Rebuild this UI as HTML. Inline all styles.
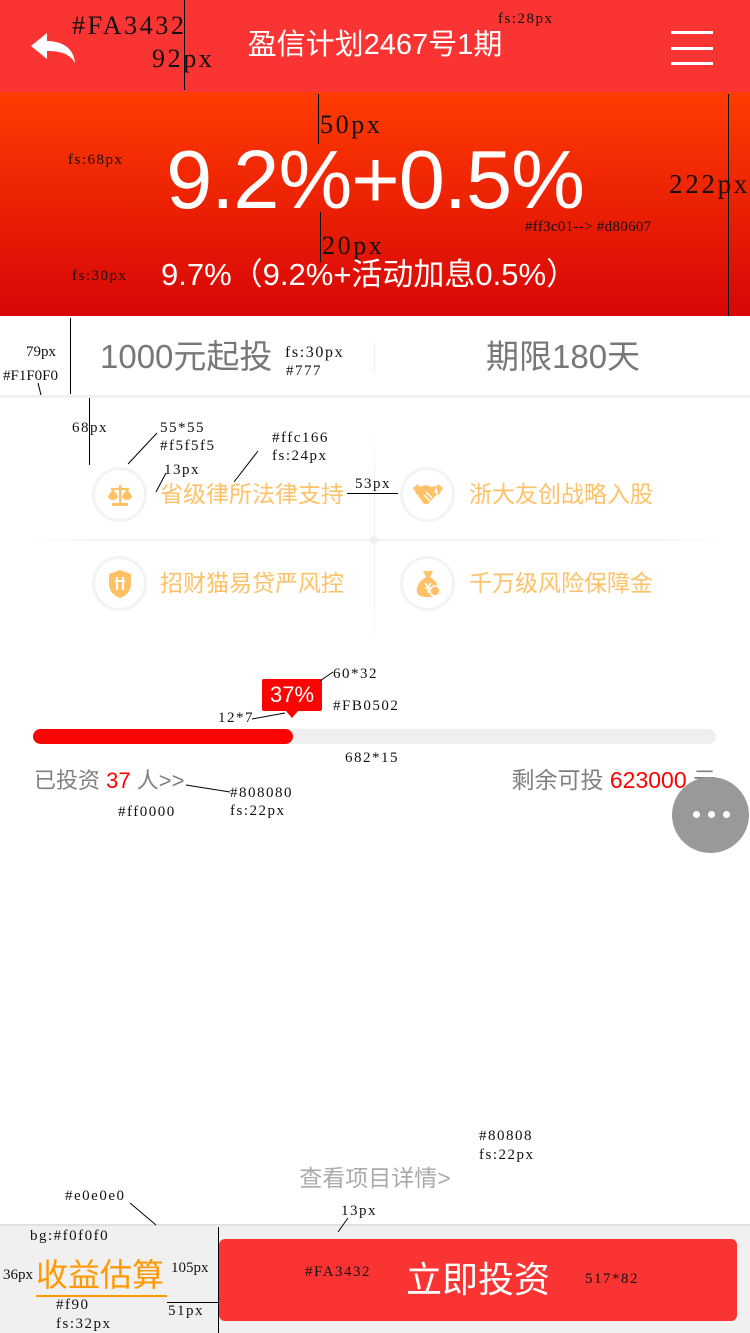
<!DOCTYPE html>
<html><head><meta charset="utf-8"><style>
*{margin:0;padding:0;box-sizing:border-box}
body{width:750px;height:1333px;position:relative;background:#fff;font-family:"Liberation Sans","Noto Sans CJK SC",sans-serif;overflow:hidden}
.a{position:absolute;white-space:nowrap}
.n{position:absolute;white-space:nowrap;font-family:"Liberation Serif","Noto Serif CJK SC",serif;color:#111;line-height:1;letter-spacing:0.1em}
.vl{position:absolute;width:1px;background:#000}
.hl{position:absolute;height:1px;background:#000}
.circ{position:absolute;width:55px;height:55px;border-radius:50%;border:3px solid #f3f3f3;background:#fff}
.ft{position:absolute;color:#ffc166;font-size:23px;line-height:24px}
</style></head><body>
<!-- header -->
<div class="a" style="left:0;top:0;width:750px;height:92px;background:#FA3432"></div>
<svg class="a" style="left:30px;top:32px" width="48" height="32" viewBox="0 0 48 32"><path d="M1 14 L17 1 L17 9 C33 9 44 17 45 31 C40 22 31 19 17 19 L17 27 Z" fill="#fff"/></svg>
<div class="a" style="left:0;width:750px;top:27px;text-align:center;color:#fff;font-size:29px;line-height:36px">盈信计划2467号1期</div>
<div class="a" style="left:671px;top:31px;width:42px;height:3px;background:#fff"></div>
<div class="a" style="left:671px;top:47px;width:42px;height:3px;background:#fff"></div>
<div class="a" style="left:671px;top:62px;width:42px;height:3px;background:#fff"></div>
<!-- hero -->
<div class="a" style="left:0;top:92px;width:750px;height:224px;background:linear-gradient(#ff3c01,#d80607)"></div>
<div class="a" style="left:0;width:750px;top:136px;text-align:center;color:#fff;font-size:83px;line-height:88px;letter-spacing:-1px">9.2%+0.5%</div>
<div class="a" style="left:161px;top:256px;color:#fff;font-size:31px;line-height:38px">9.7%（9.2%+活动加息0.5%）</div>
<!-- terms row -->
<div class="a" style="left:100px;top:337px;color:#777;font-size:33px;line-height:40px">1000元起投</div>
<div class="a" style="left:486px;top:337px;color:#777;font-size:33px;line-height:40px">期限180天</div>
<div class="a" style="left:374px;top:342px;width:1px;height:30px;background:#eee"></div>
<div class="a" style="left:0;top:395px;width:750px;height:3px;background:#F1F0F0"></div>
<!-- features -->
<div class="a" style="left:20px;top:539px;width:710px;height:2px;background:linear-gradient(90deg,#fff,#f2f2f2 15%,#f2f2f2 85%,#fff)"></div>
<div class="a" style="left:374px;top:425px;width:1px;height:225px;background:linear-gradient(#fff,#f2f2f2 20%,#f2f2f2 80%,#fff)"></div>
<div class="a" style="left:370px;top:536px;width:8px;height:8px;border-radius:50%;background:#eee"></div>
<div class="circ" style="left:92px;top:467px"></div>
<div class="circ" style="left:400px;top:467px"></div>
<div class="circ" style="left:92px;top:556px"></div>
<div class="circ" style="left:400px;top:556px"></div>
<svg class="a" style="left:106px;top:481px" width="28" height="28" viewBox="0 0 28 28" fill="#ffc166"><rect x="13" y="4" width="2.5" height="18"/><rect x="5" y="7" width="18" height="2"/><path d="M2 15 L7 8 L12 15 A5 4 0 0 1 2 15Z M16 15 L21 8 L26 15 A5 4 0 0 1 16 15Z"/><rect x="6" y="22" width="16" height="3"/></svg>
<svg class="a" style="left:412px;top:482px" width="32" height="26" viewBox="0 0 32 26" fill="#ffc166"><path d="M1 6 L6 2 L10 10 L5 13Z M31 6 L26 2 L22 10 L27 13Z M7 5 L14 3 L19 5 L24 4 L26 11 L16 22 L12 22 L6 14Z"/><path d="M14 10 L20 16 M12 13 L18 19" stroke="#fff" stroke-width="1.5"/></svg>
<svg class="a" style="left:106px;top:569px" width="28" height="30" viewBox="0 0 28 30" fill="#ffc166"><path d="M14 1 L25 5 L25 15 C25 22 20 27 14 29 C8 27 3 22 3 15 L3 5Z"/><path d="M11 8 L11 21 M17 8 L17 21 M9 12 H19" stroke="#fff" stroke-width="2"/></svg>
<svg class="a" style="left:414px;top:569px" width="28" height="30" viewBox="0 0 28 30" fill="#ffc166"><path d="M9 2 L19 2 L16 8 C23 12 25 18 24 23 C23 27 19 28 14 28 C8 28 4 27 3 23 C2 18 5 12 12 8Z"/><circle cx="21" cy="22" r="5" fill="#ffc166" stroke="#fff" stroke-width="1.5"/><path d="M11 14 L14 18 L17 14 M14 18 V24 M11 19 H17" stroke="#fff" stroke-width="1.6" fill="none"/></svg>
<div class="ft" style="left:160px;top:482px">省级律所法律支持</div>
<div class="ft" style="left:469px;top:482px">浙大友创战略入股</div>
<div class="ft" style="left:160px;top:571px">招财猫易贷严风控</div>
<div class="ft" style="left:469px;top:571px">千万级风险保障金</div>
<!-- progress -->
<div class="a" style="left:262px;top:679px;width:60px;height:32px;background:#FB0502;border-radius:2px;color:#fff;font-size:22px;line-height:32px;text-align:center">37%</div>
<div class="a" style="left:286px;top:711px;width:0;height:0;border-left:6px solid transparent;border-right:6px solid transparent;border-top:7px solid #FB0502"></div>
<div class="a" style="left:33px;top:729px;width:683px;height:15px;background:#efefef;border-radius:8px"></div>
<div class="a" style="left:33px;top:729px;width:260px;height:15px;background:#FB0502;border-radius:8px"></div>
<div class="a" style="left:34px;top:767px;color:#808080;font-size:22px;line-height:28px">已投资 <span style="color:#f00">37</span> 人&gt;&gt;</div>
<div class="a" style="right:34px;top:766px;color:#808080;font-size:23px;line-height:28px">剩余可投 <span style="color:#f00">623000</span> 元</div>
<div class="a" style="left:672px;top:777px;width:77px;height:76px;border-radius:50%;background:#999"></div>
<div class="a" style="left:693px;top:811px;width:7px;height:7px;border-radius:50%;background:#fff"></div>
<div class="a" style="left:708px;top:811px;width:7px;height:7px;border-radius:50%;background:#fff"></div>
<div class="a" style="left:723px;top:811px;width:7px;height:7px;border-radius:50%;background:#fff"></div>
<!-- details -->
<div class="a" style="left:0;width:750px;top:1164px;text-align:center;color:#aaa;font-size:23px;line-height:28px">查看项目详情&gt;</div>
<!-- bottom bar -->
<div class="a" style="left:0;top:1224px;width:750px;height:109px;background:#f0f0f0;border-top:2px solid #e0e0e0"></div>
<div class="a" style="left:36px;top:1256px;color:#f90;font-size:32px;line-height:38px">收益估算</div>
<div class="a" style="left:36px;top:1295px;width:131px;height:2px;background:#f90"></div>
<div class="a" style="left:219px;top:1239px;width:518px;height:82px;background:#FA3432;border-radius:6px;color:#fff;font-size:36px;line-height:82px;text-align:center">立即投资</div>
<!-- annotations -->
<div class="vl" style="left:184px;top:0;height:90px"></div>
<div class="n" style="left:72px;top:13px;font-size:26px">#FA3432</div>
<div class="n" style="left:152px;top:46px;font-size:26px">92px</div>
<div class="n" style="left:498px;top:12px;font-size:15px">fs:28px</div>
<div class="vl" style="left:318px;top:94px;height:50px"></div>
<div class="n" style="left:320px;top:112px;font-size:26px">50px</div>
<div class="n" style="left:68px;top:153px;font-size:15px">fs:68px</div>
<div class="vl" style="left:728px;top:94px;height:222px"></div>
<div class="n" style="left:669px;top:171px;font-size:27px">222px</div>
<div class="n" style="left:525px;top:220px;font-size:15px;letter-spacing:0.02em">#ff3c01--&gt; #d80607</div>
<div class="vl" style="left:320px;top:212px;height:50px"></div>
<div class="n" style="left:322px;top:233px;font-size:26px">20px</div>
<div class="n" style="left:72px;top:269px;font-size:15px">fs:30px</div>
<div class="vl" style="left:70px;top:318px;height:76px"></div>
<div class="n" style="left:26px;top:345px;font-size:15px;letter-spacing:0">79px</div>
<div class="n" style="left:3px;top:369px;font-size:15px;letter-spacing:0">#F1F0F0</div>
<div class="n" style="left:285px;top:345px;font-size:16px">fs:30px</div>
<div class="n" style="left:286px;top:364px;font-size:15px">#777</div>
<div class="vl" style="left:89px;top:398px;height:67px"></div>
<div class="n" style="left:72px;top:421px;font-size:15px">68px</div>
<div class="n" style="left:160px;top:421px;font-size:15px">55*55</div>
<div class="n" style="left:160px;top:439px;font-size:15px">#f5f5f5</div>
<div class="n" style="left:164px;top:463px;font-size:15px">13px</div>
<div class="n" style="left:272px;top:431px;font-size:15px">#ffc166</div>
<div class="n" style="left:272px;top:449px;font-size:15px">fs:24px</div>
<div class="hl" style="left:347px;top:493px;width:51px"></div>
<div class="n" style="left:355px;top:477px;font-size:15px">53px</div>
<div class="n" style="left:333px;top:667px;font-size:15px">60*32</div>
<div class="n" style="left:333px;top:699px;font-size:15px">#FB0502</div>
<div class="n" style="left:218px;top:711px;font-size:15px">12*7</div>
<div class="n" style="left:345px;top:751px;font-size:15px">682*15</div>
<div class="n" style="left:230px;top:786px;font-size:15px">#808080</div>
<div class="n" style="left:230px;top:804px;font-size:15px">fs:22px</div>
<div class="n" style="left:118px;top:805px;font-size:15px">#ff0000</div>
<div class="n" style="left:479px;top:1129px;font-size:15px">#80808</div>
<div class="n" style="left:479px;top:1148px;font-size:15px">fs:22px</div>
<div class="n" style="left:65px;top:1189px;font-size:15px">#e0e0e0</div>
<div class="n" style="left:341px;top:1204px;font-size:15px">13px</div>
<div class="n" style="left:30px;top:1229px;font-size:15px">bg:#f0f0f0</div>
<div class="n" style="left:3px;top:1268px;font-size:15px;letter-spacing:0">36px</div>
<div class="n" style="left:171px;top:1261px;font-size:15px;letter-spacing:0">105px</div>
<div class="n" style="left:305px;top:1265px;font-size:15px">#FA3432</div>
<div class="n" style="left:585px;top:1272px;font-size:15px">517*82</div>
<div class="n" style="left:56px;top:1298px;font-size:15px">#f90</div>
<div class="n" style="left:56px;top:1317px;font-size:15px">fs:32px</div>
<div class="n" style="left:168px;top:1304px;font-size:15px">51px</div>
<div class="vl" style="left:218px;top:1227px;height:106px"></div>
<div class="hl" style="left:167px;top:1302px;width:51px"></div>
<svg class="a" style="left:0;top:0" width="750" height="1333">
<g stroke="#000" stroke-width="1">
<line x1="157" y1="433" x2="128" y2="464"/>
<line x1="166" y1="473" x2="156" y2="492"/>
<line x1="258" y1="451" x2="234" y2="482"/>
<line x1="38" y1="383" x2="41" y2="395"/>
<line x1="333" y1="672" x2="320" y2="681"/>
<line x1="252" y1="719" x2="285" y2="713"/>
<line x1="186" y1="785" x2="230" y2="792"/>
<line x1="130" y1="1203" x2="156" y2="1225"/>
<line x1="348" y1="1218" x2="338" y2="1232"/>
</g></svg>
</body></html>
